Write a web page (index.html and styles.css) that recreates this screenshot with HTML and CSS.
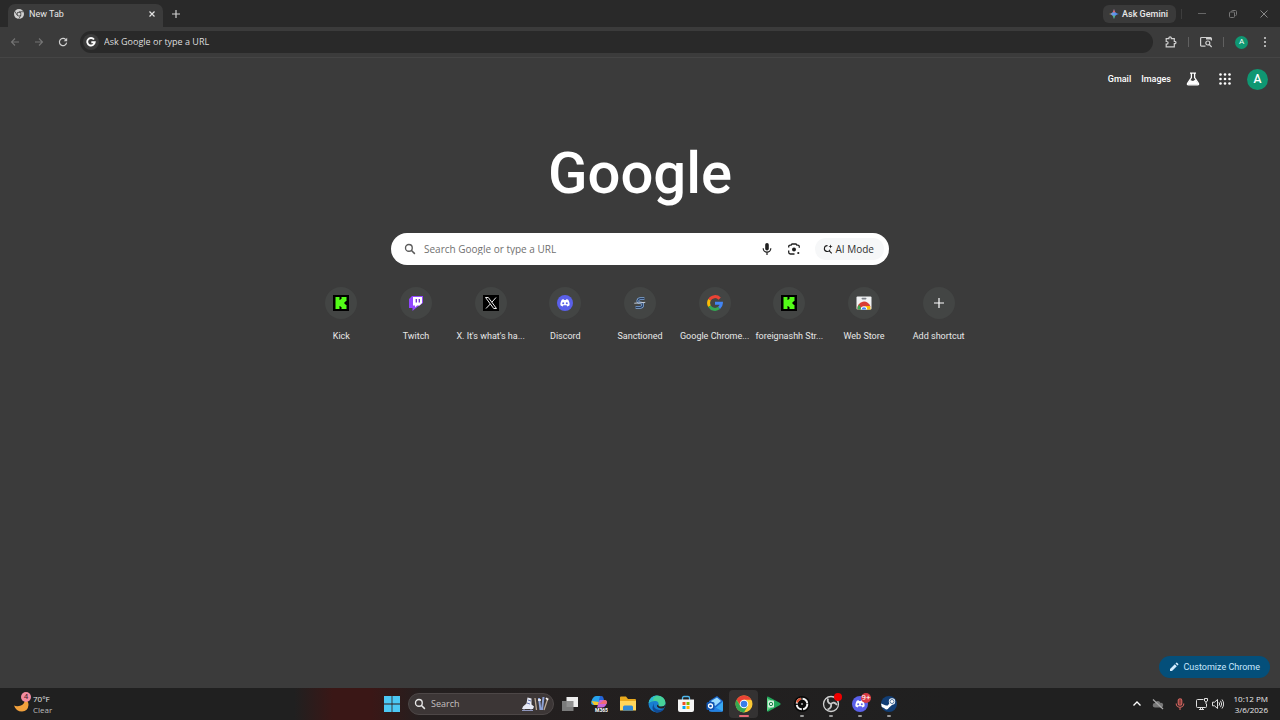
FILE: index.html
```html
<!DOCTYPE html>
<html lang="en">
  <head>
    <meta charset="UTF-8" />
    <meta name="viewport" content="width=device-width, initial-scale=1.0" />
    <title>New Tab</title>
    <link rel="stylesheet" href="styles.css">
  </head>
  <body>
    <!-- shared icons -->
    <svg class="defs" aria-hidden="true">
      <symbol id="kick" viewBox="0 0 16 16">
        <path fill="#000" d="M0 0h16v16H0z" />
        <path fill="#53fc18" d="M2.500 2h4v3h1V4h1V2h5v4h-1v1h-1v2h1v1h1v4h-5v-2h-1v-1h-1v3h-4z" />
      </symbol>
      <symbol id="discord" viewBox="0 0 16 16">
        <circle cx="8" cy="8" r="8" fill="#5a60ea" />
        <path fill="#fff" d="M5 4.600l1.700-.4.4.7h1.800l.4-.7 1.700.4c1.200 1.700 1.700 3.500 1.600 5.600-.8.6-1.500 1-2.300 1.200l-.7-1.100H6.400l-.7 1.100c-.8-.2-1.500-.6-2.300-1.200C3.300 8.100 3.800 6.300 5 4.600z" />
        <circle cx="6.200" cy="8.200" r="1" fill="#5a60ea" />
        <circle cx="9.800" cy="8.200" r="1" fill="#5a60ea" />
      </symbol>
      <symbol id="magnifier" viewBox="0 0 16 16">
        <circle cx="6.500" cy="6.500" r="4.500" fill="none" stroke="currentColor" stroke-width="1.800" />
        <path d="M10 10l4.500 4.500" stroke="currentColor" stroke-width="2" />
      </symbol>
    </svg>

    <header class="tab-strip">
      <div class="tab">
        <svg class="icon-10" viewBox="0 0 16 16">
          <circle cx="8" cy="8" r="8" fill="#d0d0d0" />
          <circle cx="8" cy="8" r="3.800" fill="#3b3b3b" />
          <circle cx="8" cy="8" r="2.600" fill="#d0d0d0" />
          <path d="M8 4.400h7M4.900 9.800L1.400 3.800M11.100 9.800L7.600 15.800" stroke="#3b3b3b" stroke-width="1.200" />
        </svg>
        <span class="tab-title">New Tab</span>
        <button class="icon-button" aria-label="Close tab">
          <svg class="icon-8" viewBox="0 0 8 8"><path d="M1.500 1.500l5 5M6.500 1.500l-5 5" stroke="#e3e3e3" stroke-width="1.200" /></svg>
        </button>
      </div>
      <button class="icon-button new-tab" aria-label="New tab">
        <svg class="icon-8" viewBox="0 0 8 8"><path d="M4 0v8M0 4h8" stroke="#d0d0d0" stroke-width="1.200" /></svg>
      </button>
      <button class="gemini">
        <svg class="icon-10" viewBox="0 0 16 16">
          <defs>
            <linearGradient id="spark" x1="0" y1="0" x2="1" y2="0">
              <stop offset="0" stop-color="#e8b23c" />
              <stop offset=".3" stop-color="#6d9be8" />
              <stop offset="1" stop-color="#3d86f5" />
            </linearGradient>
          </defs>
          <path fill="url(#spark)" d="M8 0c.7 4.700 3.300 7.300 8 8-4.700.7-7.300 3.300-8 8-.7-4.700-3.300-7.300-8-8 4.700-.7 7.300-3.300 8-8z" />
          <path fill="#e8605a" d="M8 0c.3 2 .9 3.600 1.900 4.900L8 6 6.100 4.900C7.100 3.600 7.700 2 8 0z" />
          <path fill="#55b66c" d="M8 16c-.3-2-.9-3.600-1.900-4.900L8 10l1.900 1.100C8.900 12.400 8.300 14 8 16z" />
        </svg>
        Ask Gemini
      </button>
      <span class="divider faint"></span>
      <div class="window-buttons">
        <button class="icon-button" aria-label="Minimize">
          <svg class="icon-8" viewBox="0 0 8 8"><path d="M0 3.500h8" stroke="#666" /></svg>
        </button>
        <button class="icon-button" aria-label="Restore">
          <svg class="icon-8" viewBox="0 0 8 8"><g fill="none" stroke="#777"><rect x=".5" y="2" width="5" height="5.500" rx="1" /><path d="M2.500 1.500q0-1 1-1h3q1 0 1 1v3q0 1-1 1" /></g></svg>
        </button>
        <button class="icon-button" aria-label="Close window">
          <svg class="icon-8" viewBox="0 0 8 8"><path d="M.5.5l7 7M7.500.5l-7 7" stroke="#888" /></svg>
        </button>
      </div>
    </header>

    <nav class="toolbar">
      <div class="nav-buttons">
        <button class="icon-button" aria-label="Back" disabled>
          <svg class="icon-10" viewBox="0 0 10 10"><path d="M9 5H1.500M5 1.500L1.500 5 5 8.500" fill="none" stroke="#747474" stroke-width="1.100" /></svg>
        </button>
        <button class="icon-button" aria-label="Forward" disabled>
          <svg class="icon-10" viewBox="0 0 10 10"><path d="M1 5h7.500M5 1.500L8.500 5 5 8.500" fill="none" stroke="#747474" stroke-width="1.100" /></svg>
        </button>
        <button class="icon-button" aria-label="Reload">
          <svg class="icon-10" viewBox="0 0 10 10"><path d="M8.600 5.600A3.600 3.600 0 1 1 7.800 2.700" fill="none" stroke="#d0d0d0" stroke-width="1.200" /><path d="M9.200.8v3.500H5.700z" fill="#d0d0d0" /></svg>
        </button>
      </div>
      <label class="omnibox">
        <span class="google-badge">
          <svg class="icon-10" viewBox="0 0 16 16"><path d="M12.800 4A6 6 0 1 0 14 8.300H8.500" fill="none" stroke="#fff" stroke-width="3" /></svg>
        </span>
        <input type="text" placeholder="Ask Google or type a URL" aria-label="Address" />
      </label>
      <div class="toolbar-actions">
        <button class="icon-button" aria-label="Extensions">
          <svg class="icon-12" viewBox="0 0 12 12"><path d="M1.200 2.600h2.700V2a1.200 1.200 0 0 1 2.400 0v.6h3v2.700h.5a1.200 1.200 0 0 1 0 2.400h-.5v3.200H1.200V8.100h.6a1.200 1.200 0 0 0 0-2.600h-.6z" fill="none" stroke="#d0d0d0" stroke-width="1.200" /></svg>
        </button>
        <span class="divider"></span>
        <button class="icon-button" aria-label="Search tabs">
          <svg class="icon-12" viewBox="0 0 12 12"><path d="M5.500 10.200H1.600q-1 0-1-1V2.500q0-1 1-1h8.800q1 0 1 1v2" fill="none" stroke="#d0d0d0" stroke-width="1.200" /><path d="M6 1.500h5v2H6z" fill="#d0d0d0" /><circle cx="7.800" cy="7" r="2" fill="none" stroke="#d0d0d0" stroke-width="1.200" /><path d="M9.300 8.500l2.400 2.600" stroke="#d0d0d0" stroke-width="1.200" /></svg>
        </button>
        <span class="divider"></span>
        <button class="avatar small" aria-label="Profile">A</button>
        <button class="icon-button" aria-label="Menu">
          <svg class="icon-12" viewBox="0 0 12 12" fill="#d8d8d8"><circle cx="6" cy="2" r="1" /><circle cx="6" cy="6" r="1" /><circle cx="6" cy="10" r="1" /></svg>
        </button>
      </div>
    </nav>

    <main class="page">
      <div class="page-header">
        <a href="#">Gmail</a>
        <a href="#">Images</a>
        <button class="icon-button" aria-label="Search Labs">
          <svg class="icon-14" viewBox="0 0 14 14"><path d="M4 1.200h6M5.400 1.500v4L1.600 11.300q-.7 1.500.8 1.500h9.200q1.500 0 .8-1.500L8.600 5.500v-4" fill="none" stroke="#fff" stroke-width="1.300" /><path d="M4 8l3 1 2.500-1.500L12.600 12.500H1.400z" fill="#fff" /></svg>
        </button>
        <button class="icon-button" aria-label="Google apps">
          <svg class="icon-14" viewBox="0 0 14 14" fill="#fff"><circle cx="2.500" cy="2.500" r="1.300" /><circle cx="7" cy="2.500" r="1.300" /><circle cx="11.500" cy="2.500" r="1.300" /><circle cx="2.500" cy="7" r="1.300" /><circle cx="7" cy="7" r="1.300" /><circle cx="11.500" cy="7" r="1.300" /><circle cx="2.500" cy="11.500" r="1.300" /><circle cx="7" cy="11.500" r="1.300" /><circle cx="11.500" cy="11.500" r="1.300" /></svg>
        </button>
        <button class="avatar account" aria-label="Google Account">A</button>
      </div>

      <h1 class="logo">Google</h1>

      <form class="search-box">
        <svg class="icon-12" viewBox="0 0 16 16"><use href="#magnifier" /></svg>
        <input type="text" placeholder="Search Google or type a URL" aria-label="Search" />
        <button type="button" class="icon-button" aria-label="Voice search">
          <svg class="icon-12" viewBox="0 0 12 12"><rect x="4.200" y="0" width="3.600" height="7.500" rx="1.800" fill="#1f1f1f" /><path d="M2.200 5.300a3.800 3.800 0 0 0 7.600 0M6 9v3" fill="none" stroke="#1f1f1f" stroke-width="1.200" /></svg>
        </button>
        <button type="button" class="icon-button" aria-label="Image search">
          <svg class="icon-12" viewBox="0 0 12 12"><path d="M.7 4.500V3.700q0-1.500 1.500-1.500h1L4 1h4l.8 1.200h1q1.500 0 1.500 1.500v1M.7 7.500V9.300q0 1.700 1.700 1.700H6.500" fill="none" stroke="#1f1f1f" stroke-width="1.300" /><circle cx="6" cy="6.500" r="2" fill="#1f1f1f" /><circle cx="10.300" cy="10" r="1.100" fill="#1f1f1f" /></svg>
        </button>
        <button type="button" class="ai-mode">
          <svg class="icon-10" viewBox="0 0 12 12"><path d="M5.500 2A3.500 3.500 0 1 0 8.400 6.800M7.500 8.200l3 3" fill="none" stroke="#1f1f1f" stroke-width="1.300" /><path d="M9 .5l.7 1.800 1.800.7-1.800.7L9 5.500l-.7-1.800L6.500 3l1.800-.7z" fill="#1f1f1f" /></svg>
          AI Mode
        </button>
      </form>

      <nav class="shortcuts">
        <a class="shortcut" href="#">
          <span class="tile"><svg class="icon-16"><use href="#kick" /></svg></span>
          <span class="name">Kick</span>
        </a>
        <a class="shortcut" href="#">
          <span class="tile"><svg class="icon-16" viewBox="0 0 16 16"><path fill="#9146ff" d="M4 1L1 4v9h3.500v3L8 13l7-5V1z" /><path fill="#fff" d="M5 2h9v6l-2.500 2.500H9L7 12.500v-2H5z" /><path d="M8.300 4v3.500M11.300 4v3.500" stroke="#6c2bd0" stroke-width="1.300" /></svg></span>
          <span class="name">Twitch</span>
        </a>
        <a class="shortcut" href="#">
          <span class="tile"><svg class="icon-16" viewBox="0 0 16 16"><path fill="#000" d="M0 0h16v16H0z" /><path d="M2.500 2.500h2.800l8.200 11h-2.800zM13 2.500L8.900 7.200M7.300 9L3 13.500" fill="none" stroke="#eee" stroke-width="1" /></svg></span>
          <span class="name">X. It's what's ha...</span>
        </a>
        <a class="shortcut" href="#">
          <span class="tile"><svg class="icon-16"><use href="#discord" /></svg></span>
          <span class="name">Discord</span>
        </a>
        <a class="shortcut" href="#">
          <span class="tile"><svg class="icon-14" viewBox="0 0 16 16"><path d="M13 3H8.500Q6 3 5.500 5.300 5.200 7.500 7.500 7.700L9.500 8q2 .3 1.600 2.500-.4 2.500-3 2.500H3" fill="none" stroke="#83a9d8" stroke-width="3" /><path d="M13 3H8.500Q6 3 5.500 5.300 5.200 7.500 7.500 7.700L9.500 8q2 .3 1.600 2.500-.4 2.500-3 2.500H3" fill="none" stroke="#253b5e" stroke-width="1.200" /><path d="M1.500 8.300L14 7.300" stroke="#d6dde6" stroke-width="1" /></svg></span>
          <span class="name">Sanctioned</span>
        </a>
        <a class="shortcut" href="#">
          <span class="tile"><svg class="icon-16" viewBox="0 0 16 16" fill="none" stroke-width="3"><path d="M2.500 4.800A6.400 6.400 0 0 1 12.700 3.600" stroke="#ea4335" /><path d="M2.500 11.200A6.400 6.400 0 0 1 2.500 4.800" stroke="#fbbc05" /><path d="M12.100 12.900A6.400 6.400 0 0 1 2.500 11.200" stroke="#34a853" /><path d="M8 8.200h6.400A6.400 6.400 0 0 1 12.100 12.900" stroke="#4285f4" /></svg></span>
          <span class="name">Google Chrome...</span>
        </a>
        <a class="shortcut" href="#">
          <span class="tile"><svg class="icon-16"><use href="#kick" /></svg></span>
          <span class="name">foreignashh Str...</span>
        </a>
        <a class="shortcut" href="#">
          <span class="tile"><svg class="icon-16" viewBox="0 0 16 16"><rect x=".5" y="1.500" width="15" height="13" rx="1" fill="#f1f3f4" /><rect x="5.500" y="2.800" width="5" height="1.600" rx=".8" fill="#7d8187" /><path d="M1.500 14.500a6.500 6.500 0 0 1 13-2.500l-4 .5H5.500l-1 2z" fill="#d93d35" /><path d="M1.500 14.500q-.1-3 1.500-5l3 5z" fill="#34a853" /><path d="M14.500 14.500q.2-1.500-.5-3.500H9v3.500z" fill="#fbbc05" /><path d="M4.800 14.500a3.200 3.200 0 0 1 6.400 0z" fill="#fff" /><path d="M5.700 14.500a2.300 2.300 0 0 1 4.600 0z" fill="#4285f4" /></svg></span>
          <span class="name">Web Store</span>
        </a>
        <button class="shortcut">
          <span class="tile"><svg class="icon-10" viewBox="0 0 10 10"><path d="M5 0v10M0 5h10" stroke="#fff" stroke-width="1.200" /></svg></span>
          <span class="name">Add shortcut</span>
        </button>
      </nav>

      <button class="customize">
        <svg class="icon-10" viewBox="0 0 10 10"><path d="M1 9V7l4.800-4.800 2 2L3 9zM6.500 1.500l.8-.8q.4-.3.8 0l1.200 1.200q.3.4 0 .8l-.8.8z" fill="#d3ecff" /></svg>
        Customize Chrome
      </button>
    </main>

    <footer class="taskbar">
      <button class="weather">
        <span class="weather-icon">
          <svg class="icon-18" viewBox="0 0 18 18"><path d="M12 3.500Q12 9 8 10.500 4 12 1 10.500 3 16.500 9 16.500q6-.5 6.500-6.500Q15.500 6 12 3.500z" fill="#f2a13c" /></svg>
          <span class="badge pink">4</span>
        </span>
        <span class="weather-text"><span>70°F</span><span class="muted">Clear</span></span>
      </button>

      <div class="apps">
        <button class="app" aria-label="Start">
          <svg class="icon-16" viewBox="0 0 16 16" fill="#4cc8f5"><path d="M0 0h7.600v7.600H0zM8.400 0H16v7.600H8.400zM0 8.400h7.600V16H0zM8.400 8.400H16V16H8.400z" /></svg>
        </button>
        <label class="task-search">
          <svg class="icon-12"><use href="#magnifier" /></svg>
          <input type="text" placeholder="Search" aria-label="Search Windows" />
          <svg class="highlight" viewBox="0 0 28 16">
            <path d="M6.500 1.500l4 1v6l2.500 2-1 2.500H1l1-2.500 3.500-3z" fill="#e6e9f5" />
            <path d="M1 14.500h11M3 13v1.500M10 13v1.500" stroke="#8f96bd" />
            <path d="M7 4l3 1M6 7l3 1" stroke="#6571ad" />
            <path d="M14 2l1.500 12M27 2l-4 12" stroke="#b9a795" stroke-width="1.300" />
            <path d="M18 2l1.500 12M22.500 1L21 14" stroke="#8da1d6" stroke-width="2" />
            <path d="M17 4h3M25 2l2 2" stroke="#fff" stroke-width="1.500" />
          </svg>
        </label>
        <button class="app" aria-label="Task view">
          <svg class="icon-16" viewBox="0 0 16 16"><path d="M4.500 1H16v10H4.500z" fill="#eee" /><path d="M0 5h11.500v10H0z" fill="#858585" opacity=".9" /></svg>
        </button>
        <button class="app" aria-label="Microsoft 365 Copilot">
          <svg class="icon-18" viewBox="0 0 18 18">
            <path d="M6.500 1H11L8 10H4q-4 0-2.500-4Q3.200 1 6.500 1z" fill="#28a4ee" />
            <path d="M1.500 6L4 10h4l1-3z" fill="#f4c72d" />
            <path d="M10 1h1.500q1.500 0 2 2l.5 2h-5z" fill="#2464d8" />
            <path d="M9.500 5H14q4 0 2.500 4-1.500 3.500-5 3.500H7z" fill="#c865d9" />
            <path d="M9 9l5-4q4 0 2.500 4z" fill="#f06b75" />
            <text x="5" y="17" class="m365">M365</text>
          </svg>
        </button>
        <button class="app" aria-label="File Explorer">
          <svg class="icon-18" viewBox="0 0 18 18"><path d="M1 2.500q0-1 1-1h5L9 4h7q1 0 1 1v10H1z" fill="#e9a91d" /><path d="M1 6h16v9.500H1z" fill="#ffd65b" /><path d="M4 15.500V12q0-1.500 1.500-1.500h7Q14 10.500 14 12v3.500z" fill="#2e8ad8" /></svg>
        </button>
        <button class="app" aria-label="Edge">
          <svg class="icon-18" viewBox="0 0 18 18"><circle cx="9" cy="9" r="8.500" fill="#187fd0" /><path d="M.7 8Q2 .5 9.500.5q7.500.5 8 7.500-.5 3.500-4 3.500-4 0-3-2 .5-3-2.500-3.500Q3.500 5.500.7 8z" fill="#47d29a" /><path d="M.7 8Q2 .5 9.500.5 4 2 5.500 5.600 3 6 .7 8z" fill="#29b9d4" /><path d="M6 8q-1.500 6 5.500 7 3 0 5-2-2.500 5-8 4.400Q2 16 6 8z" fill="#104b95" /><path d="M10.500 9.500q-1 2 3 2 3 0 4-2.500-.5 3-1.500 4-5 1.500-7-1.500-.5-2 1.500-2z" fill="#242222" /></svg>
        </button>
        <button class="app" aria-label="Microsoft Store">
          <svg class="icon-18" viewBox="0 0 18 18"><path d="M5.500 5V3q0-1.500 1.500-1.500h4q1.500 0 1.500 1.500v2" fill="none" stroke="#4eb7ec" stroke-width="1.300" /><path d="M1 4.500h16V15q0 2-2 2H3q-2 0-2-2z" fill="#f5f5f5" /><path d="M5.500 7h3v3h-3z" fill="#f05022" /><path d="M9.500 7h3v3h-3z" fill="#7db902" /><path d="M5.500 11h3v3h-3z" fill="#00a3ee" /><path d="M9.500 11h3v3h-3z" fill="#ffb800" /></svg>
        </button>
        <button class="app" aria-label="Outlook">
          <svg class="icon-18" viewBox="0 0 18 18"><path d="M3 6l8-5 6 5v9q0 1.500-1.500 1.500H4.500Q3 16.500 3 15z" fill="#1b67c9" /><path d="M5 6l6-3.500L15 6l-6 5z" fill="#9bdcff" /><path d="M17 6.500v8.500q0 1.500-1.500 1.500H5z" fill="#38a7f2" /><path d="M3 9l14 7.500H4.500Q3 16.500 3 15z" fill="#2281e5" /><rect x=".5" y="7" width="8" height="8" rx="1.500" fill="#1055b0" /><circle cx="4.500" cy="11" r="2" fill="none" stroke="#fff" stroke-width="1.300" /></svg>
        </button>
        <button class="app active" aria-label="Chrome">
          <svg class="icon-18" viewBox="0 0 18 18"><circle cx="9" cy="9" r="8.500" fill="#fcc934" /><path d="M1.600 4.800a8.500 8.500 0 0 1 14.800 0H9L5.400 11z" fill="#ea4335" /><path d="M1.600 4.800A8.500 8.500 0 0 0 9 17.500l3.700-6.400H5.300z" fill="#34a853" /><circle cx="9" cy="9" r="4.300" fill="#fff" /><circle cx="9" cy="9" r="3.300" fill="#397ee8" /></svg>
        </button>
        <button class="app" aria-label="Google Play Games">
          <svg class="icon-18" viewBox="0 0 18 18"><path d="M3 2.500Q3 1 4.500 1.800L16 8q1.500 1 0 2L4.500 16.500Q3 17 3 15.500z" fill="#22a65a" /><path d="M3 3l5 3v6l-5 4z" fill="#63d48a" /><rect x="4" y="5.500" width="6" height="7" rx="1" fill="#d8f2df" /><circle cx="7" cy="9" r="1.700" fill="none" stroke="#17834a" /></svg>
        </button>
        <button class="app running" aria-label="Aim trainer">
          <svg class="icon-16" viewBox="0 0 16 16"><circle cx="8" cy="8" r="8" fill="#090909" /><circle cx="8" cy="8" r="5.300" fill="none" stroke="#f2f2f2" stroke-width="2" stroke-dasharray="7 1.300" /><path d="M3 6.500A5.300 5.300 0 0 1 7 2.800" fill="none" stroke="#e1512f" stroke-width="2" /><circle cx="8" cy="8" r="1" fill="#aaa" /></svg>
        </button>
        <button class="app running" aria-label="OBS Studio">
          <svg class="icon-18" viewBox="0 0 18 18"><circle cx="9" cy="9" r="7.500" fill="#242424" stroke="#d0d0d0" stroke-width="1.300" /><path d="M9 9Q5 8 6 3.500M9 9q3-3 6 1M9 9q1 4-3.500 5.500" fill="none" stroke="#c8c8c8" stroke-width="1.800" /></svg>
          <span class="badge record"></span>
        </button>
        <button class="app running" aria-label="Discord">
          <svg class="icon-16"><use href="#discord" /></svg>
          <span class="badge red">9+</span>
        </button>
        <button class="app running" aria-label="Steam">
          <svg class="icon-16" viewBox="0 0 16 16"><circle cx="8" cy="8" r="8" fill="#123e75" /><path d="M0 7.500l6 2.600 3.500-3.600 2 2L7 12.500H4L.8 11z" fill="#fff" /><circle cx="11" cy="5.500" r="3.200" fill="#fff" /><circle cx="11" cy="5.500" r="2" fill="none" stroke="#52769f" /><circle cx="5.500" cy="11.500" r="2" fill="#fff" /></svg>
        </button>
      </div>

      <div class="tray">
        <button class="icon-button" aria-label="Show hidden icons">
          <svg class="icon-10" viewBox="0 0 10 10"><path d="M1.500 6.500L5 3l3.500 3.500" fill="none" stroke="#fff" stroke-width="1.300" /></svg>
        </button>
        <button class="icon-button" aria-label="OneDrive">
          <svg class="icon-12" viewBox="0 0 12 12"><path d="M3 9.500a2.300 2.300 0 0 1 0-4.600 3 3 0 0 1 5.500 0 2.300 2.300 0 0 1 .8 4.600z" fill="#777" /><path d="M1 1.500l10 9.500" stroke="#aaa" stroke-width="1.200" /></svg>
        </button>
        <button class="icon-button" aria-label="Microphone in use">
          <svg class="icon-12" viewBox="0 0 12 12" fill="none" stroke="#d0645f" stroke-width="1.100"><rect x="4.200" y=".8" width="3.600" height="6.400" rx="1.800" fill="#8c3f3b" /><path d="M2.200 5.500a3.800 3.800 0 0 0 7.600 0M6 9.300V12" /></svg>
        </button>
        <button class="quick-settings" aria-label="Network and volume">
          <svg class="icon-12" viewBox="0 0 12 12" fill="none" stroke="#ddd"><path d="M7.500 1.500H1.500q-1 0-1 1v6q0 1 1 1h8q1 0 1-1V6M3 11.500h5M4.500 9.500v2M6.500 9.500v2" /><path d="M8.500.5h3v2.500l-1.500 1-1.500-1zM10 4v2" /></svg>
          <svg class="icon-12" viewBox="0 0 12 12" fill="none" stroke="#ddd"><path d="M.5 4.200h2L5.500 1.500v9L2.500 7.800h-2zM7 4.300q1.300 1.700 0 3.400M8.500 2.800q2.400 3.200 0 6.400M10 1.500q3.300 4.500 0 9" /></svg>
        </button>
        <button class="clock"><span>10:12 PM</span><span>3/6/2026</span></button>
      </div>
    </footer>
  </body>
</html>
```
FILE: styles.css
```css
* {
  box-sizing: border-box;
}

body {
  margin: 0;
  min-height: 100vh;
  display: flex;
  flex-direction: column;
  background: #3b3b3b;
  color: #e8e8e8;
  font-family: Roboto, 'Noto Sans', sans-serif;
  font-size: 9px;
  line-height: 12px;
}

button,
input {
  margin: 0;
  padding: 0;
  border: 0;
  background: none;
  color: inherit;
  font: inherit;
  outline: none;
}

a {
  color: inherit;
  text-decoration: none;
}

svg {
  display: block;
  flex: none;
}

.defs {
  display: none;
}

.icon-8 { width: 8px; height: 8px; }
.icon-10 { width: 10px; height: 10px; }
.icon-12 { width: 12px; height: 12px; }
.icon-14 { width: 14px; height: 14px; }
.icon-16 { width: 16px; height: 16px; }
.icon-18 { width: 18px; height: 18px; }

.icon-button {
  display: flex;
  align-items: center;
  justify-content: center;
}

.divider {
  width: 1px;
  height: 10px;
  background: #606060;
}

.divider.faint {
  background: #3d3d3d;
}

/* tabs */

.tab-strip {
  display: flex;
  align-items: center;
  height: 27px;
  padding: 0 12px 0 8px;
  background: #292929;
}

.tab {
  display: flex;
  align-items: center;
  align-self: flex-end;
  gap: 5px;
  width: 155px;
  height: 23px;
  padding: 0 7px 3px 6px;
  border-radius: 7px 7px 0 0;
  background: #3b3b3b;
}

.tab-title {
  flex: 1;
}

.new-tab {
  margin-left: 9px;
}

.gemini {
  display: flex;
  align-items: center;
  gap: 3px;
  height: 18px;
  margin: 0 5px 0 auto;
  padding: 0 8px 0 6px;
  border-radius: 6px;
  background: #3a3a3a;
  font-weight: 500;
}

.window-buttons {
  display: flex;
  gap: 23px;
  margin-left: 16px;
}

/* toolbar */

.toolbar {
  display: flex;
  align-items: center;
  gap: 12px;
  height: 31px;
  padding: 0 9px 0 10px;
  border-bottom: 1px solid #454545;
}

.nav-buttons {
  display: flex;
  gap: 14px;
}

.omnibox {
  display: flex;
  flex: 1;
  align-items: center;
  gap: 5px;
  height: 22px;
  padding: 0 3px;
  border-radius: 11px;
  background: #292929;
  font-family: 'Open Sans', 'Noto Sans', sans-serif;
}

.google-badge {
  display: flex;
  align-items: center;
  justify-content: center;
  width: 16px;
  height: 16px;
  border-radius: 50%;
  background: #3b3b3b;
}

.omnibox input {
  flex: 1;
}

.omnibox input::placeholder {
  color: #dedede;
}

.toolbar-actions {
  display: flex;
  align-items: center;
  gap: 11px;
}

.avatar {
  width: 21px;
  height: 21px;
  border-radius: 50%;
  background: #0f9772;
  color: #fff;
  font-size: 12px;
}

.avatar.small {
  width: 13px;
  height: 13px;
  font-size: 8px;
}

.avatar.account {
  margin-left: 3px;
}

/* new tab page */

.page {
  display: flex;
  flex: 1;
  flex-direction: column;
  align-items: center;
}

.page-header {
  display: flex;
  align-items: center;
  align-self: stretch;
  justify-content: flex-end;
  height: 42px;
  padding-right: 12px;
  color: #fff;
  font-weight: 500;
}

.page-header a {
  margin-right: 10px;
}

.page-header .icon-button {
  margin-left: 5px;
  margin-right: 13px;
}

.page-header .avatar {
  margin-left: 2px;
}

.logo {
  margin: 37px 0 0;
  color: #fff;
  font-size: 58px;
  font-weight: 500;
  line-height: 72px;
}

.search-box {
  display: flex;
  align-items: center;
  width: 498px;
  max-width: 100%;
  height: 32px;
  margin-top: 24px;
  padding: 0 5px 0 13px;
  border-radius: 16px;
  background: #fff;
  color: #5a5a5a;
  font-family: 'Open Sans', 'Noto Sans', sans-serif;
  font-size: 10px;
}

.search-box input {
  flex: 1;
  margin-left: 8px;
}

.search-box input::placeholder {
  color: #707070;
}

.search-box .icon-button {
  margin-right: 15px;
}

.ai-mode {
  display: flex;
  align-items: center;
  gap: 3px;
  height: 22px;
  padding: 0 10px 0 8px;
  border-radius: 11px;
  background: #f6f7f8;
  color: #303030;
}

.shortcuts {
  display: grid;
  grid-template-columns: repeat(9, 1fr);
  width: 672px;
  max-width: 100%;
  margin-top: 22px;
}

.shortcut {
  display: flex;
  flex-direction: column;
  align-items: center;
  gap: 11px;
  min-width: 0;
}

.tile {
  display: flex;
  align-items: center;
  justify-content: center;
  width: 32px;
  height: 32px;
  border-radius: 50%;
  background: #434544;
}

.name {
  white-space: nowrap;
}

.customize {
  display: flex;
  align-items: center;
  align-self: flex-end;
  gap: 4px;
  height: 22px;
  margin: auto 10px 10px;
  padding: 0 10px;
  border-radius: 11px;
  background: #044f7a;
  color: #c8e8ff;
}

/* taskbar */

.taskbar {
  display: grid;
  grid-template-columns: 1fr auto 1fr;
  align-items: center;
  height: 32px;
  background: linear-gradient(90deg, #202020 23%, #3a1716 26%, #3a1716 29%, #241f1f 33%, #202020 75%);
}

.weather {
  display: flex;
  align-items: center;
  justify-self: start;
  gap: 2px;
  padding-left: 13px;
}

.weather-icon {
  position: relative;
}

.weather-text,
.clock {
  display: flex;
  flex-direction: column;
  font-family: 'Open Sans', 'Noto Sans', sans-serif;
  font-size: 8px;
  line-height: 11px;
  text-align: left;
}

.muted {
  color: #bdbdbd;
}

.badge {
  position: absolute;
  top: -3px;
  right: 0;
  min-width: 10px;
  height: 10px;
  border-radius: 5px;
  font-size: 8px;
  line-height: 10px;
  text-align: center;
}

.app .badge {
  top: 3px;
  right: 3px;
}

.badge.pink {
  background: #f38ba0;
  color: #43202a;
}

.badge.red {
  background: #d83b44;
  color: #fff;
}

.badge.record {
  min-width: 8px;
  height: 8px;
  background: #f00000;
}

.apps {
  display: flex;
  align-items: center;
}

.app {
  position: relative;
  display: flex;
  align-items: center;
  justify-content: center;
  width: 29px;
  height: 28px;
}

.app.active {
  border-radius: 4px;
  background: #343232;
}

.app.running::after,
.app.active::after {
  content: '';
  position: absolute;
  bottom: 1px;
  width: 4px;
  height: 2px;
  border-radius: 1px;
  background: #9a9a9a;
}

.app.active::after {
  width: 10px;
  background: #e66a75;
}

.m365 {
  fill: #fff;
  font-size: 5px;
  font-weight: 700;
}

.task-search {
  display: flex;
  align-items: center;
  gap: 5px;
  width: 146px;
  height: 22px;
  margin: 0 1px 0 2px;
  padding: 0 4px 0 5px;
  border: 1px solid #4d4747;
  border-radius: 11px;
  background: #3c3636;
  font-family: 'Open Sans', 'Noto Sans', sans-serif;
  font-size: 9px;
}

.task-search input {
  flex: 1;
  min-width: 0;
}

.task-search input::placeholder {
  color: #c4c0c0;
}

.highlight {
  width: 28px;
  height: 16px;
}

.tray {
  display: flex;
  align-items: center;
  justify-self: end;
  gap: 10px;
  padding-right: 12px;
}

.quick-settings {
  display: flex;
  gap: 4px;
}

.clock {
  text-align: right;
}
```
